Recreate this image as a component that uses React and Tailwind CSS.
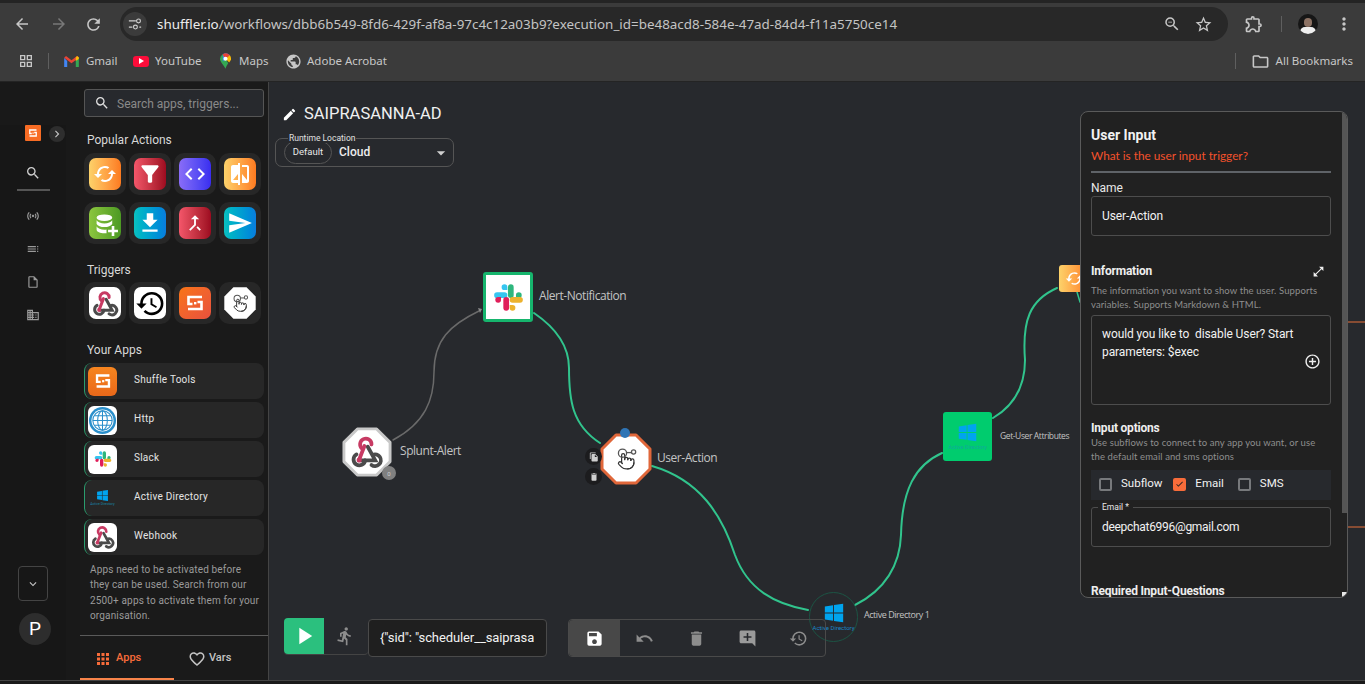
import React from "react";
import {
  MdArrowBack, MdArrowForward, MdRefresh, MdZoomOut, MdStarBorder, MdOutlineExtension, MdMoreVert,
  MdOutlineGridView, MdOutlineFolder, MdPublic, MdSearch, MdEdit, MdArrowDropDown, MdSave, MdUndo, MdDelete,
  MdAddComment, MdHistory, MdPlayArrow, MdDirectionsRun, MdApps, MdFavoriteBorder, MdAddCircleOutline,
  MdOpenInFull, MdCached, MdFilterAlt, MdCode, MdCompare, MdFileDownload, MdCallMerge, MdSend, MdSensors,
  MdToc, MdOutlineInsertDriveFile, MdBusiness, MdKeyboardArrowDown, MdChevronRight, MdFileCopy, MdCheck,
} from "react-icons/md";
import { Pointer } from "lucide-react";

const Webhook = ({ className }) => (
  <svg viewBox="0 0 24 24" className={className} fill="none" strokeWidth="2.500" strokeLinecap="round">
    <path d="M12.500 8.500 L17.500 17.500 H8" stroke="#4b4b4b" />
    <path d="M8.800 9.800 A3.800 3.800 0 1 1 15 7" stroke="#c73a63" />
    <path d="M10.300 8 L7 16.500" stroke="#c73a63" />
    <path d="M5 13.600 A3.900 3.900 0 1 0 10.800 17.500" stroke="#4b4b4b" />
    <path d="M15.800 13.900 A3.900 3.900 0 1 1 15 20.600" stroke="#4b4b4b" />
    <circle cx="6.800" cy="17.300" r="1.700" fill="#c73a63" stroke="none" />
  </svg>
);

const Slack = ({ className }) => (
  <svg viewBox="0 0 54 54" className={className}>
    <path fill="#36c5f0" d="M20 4a5 5 0 1 0 0 10h5V9a5 5 0 0 0-5-5zM20 18H7a5 5 0 0 0 0 10h13a5 5 0 0 0 0-10z" />
    <path fill="#2eb67d" d="M50 23a5 5 0 1 0-10 0v5h5a5 5 0 0 0 5-5zM36 23V9a5 5 0 1 0-10 0v14a5 5 0 1 0 10 0z" />
    <path fill="#ecb22e" d="M34 50a5 5 0 1 0 0-10h-5v5a5 5 0 0 0 5 5zM34 36h13a5 5 0 1 0 0-10H34a5 5 0 1 0 0 10z" />
    <path fill="#e01e5a" d="M4 31a5 5 0 1 0 10 0v-5H9a5 5 0 0 0-5 5zM18 31v14a5 5 0 1 0 10 0V31a5 5 0 1 0-10 0z" />
  </svg>
);

const Windows = ({ className }) => (
  <svg viewBox="0 0 24 24" className={className} fill="#00a4ef">
    <path d="M2 5 L11 3.600 V11.400 H2 Z M12 3.400 L22 2 V11.400 H12 Z M2 12.500 H11 V20.400 L2 19 Z M12 12.500 H22 V22 L12 20.600 Z" />
  </svg>
);

const ShuffleMark = ({ className }) => (
  <svg viewBox="0 0 24 24" className={className} fill="none" stroke="#fff" strokeWidth="2.600">
    <path d="M19 6 H5.500 V13 H9.500" />
    <path d="M5 18 H18.500 V11 H14.500" />
    <rect x="11" y="11" width="2.400" height="2.400" fill="#fff" stroke="none" />
  </svg>
);

const Globe = ({ className }) => (
  <svg viewBox="0 0 30 30" className={className} fill="none">
    <circle cx="15" cy="15" r="14" fill="#2a8fcb" />
    <circle cx="15" cy="15" r="11.400" fill="#fff" />
    <g stroke="#2a8fcb" strokeWidth="1.100">
      <circle cx="15" cy="15" r="10" />
      <ellipse cx="15" cy="15" rx="5" ry="10" />
      <path d="M15 5V25M5 15H25M6.500 10H23.500M6.500 20H23.500" />
    </g>
  </svg>
);

const DbPlus = ({ className }) => (
  <svg viewBox="0 0 24 24" className={className} fill="#fff">
    <ellipse cx="10" cy="5.500" rx="7.500" ry="3.200" />
    <path d="M2.500 8c1 2 4 3 7.500 3s6.500-1 7.500-3v3.500c-1 2-4 3-7.500 3s-6.500-1-7.500-3z" />
    <path d="M2.500 14c1 2 4 3 7.500 3 .7 0 1.400 0 2-.2V20.300c-.6.100-1.300.200-2 .200-4 0-7.500-1.500-7.500-3.500z" />
    <path d="M17 13.500h2.500V17H23v2.500h-3.500V23H17v-3.500h-3.500V17H17z" />
  </svg>
);

const HandClick = ({ className }) => (
  <div className={className}>
    <Pointer className="absolute left-[18%] top-[26%] w-[66%] h-[66%] text-[#333]" strokeWidth={1.6} />
    <svg viewBox="0 0 24 24" className="absolute inset-0 w-full h-full" fill="none" stroke="#555" strokeWidth="1.100">
      <circle cx="9" cy="7" r="3.500" />
      <circle cx="18.500" cy="6" r="1.800" />
      <path d="M12.500 6.500 H16.500" />
    </svg>
  </div>
);

const Tile = ({ children, cls }) => (
  <div className="w-[42px] h-[42px] rounded-[10px] bg-[#272727] flex items-center justify-center">
    <div className={`w-[32px] h-[32px] rounded-[7px] flex items-center justify-center ${cls}`}>{children}</div>
  </div>
);

const orange = "bg-linear-to-r from-[#fcd26a] to-[#fc7a1f]";
const red = "bg-linear-to-r from-[#f4566a] to-[#9d0a20]";
const purple = "bg-linear-to-r from-[#8a6cf7] to-[#3a2cf0]";
const green = "bg-linear-to-r from-[#8cc63f] to-[#4c9a23]";
const teal = "bg-linear-to-r from-[#0cc0c0] to-[#0b7ddd]";

const AppRow = ({ icon, name }) => (
  <div className="h-[36px] w-[180px] rounded-[8px] bg-[#272727] border-l border-l-[#2a9d6e] flex items-center pl-[3px]">
    <div className="w-[29px] h-[29px] rounded-[6px] overflow-hidden flex items-center justify-center shrink-0">{icon}</div>
    <span className="ml-[17px] mb-[3px] text-[10px] text-[#e4e4e4] tracking-[0.25px]">{name}</span>
  </div>
);

const Bookmark = ({ icon, label, cls }) => (
  <div className={`flex items-center ${cls}`}>
    {icon}
    <span className="text-[11.500px] text-[#c7c7c7]">{label}</span>
  </div>
);

const Octagon = ({ stroke, width = 3, className }) => (
  <svg viewBox="0 0 52 52" className={className}>
    <polygon points="16,2 36,2 50,16 50,36 36,50 16,50 2,36 2,16" fill="#fff" stroke={stroke} strokeWidth={width} strokeLinejoin="round" />
  </svg>
);

const Checkbox = ({ label, checked, cls }) => (
  <div className={`flex items-center ${cls}`}>
    <div className={`w-[13px] h-[13px] rounded-[2px] border-2 flex items-center justify-center ${checked ? "bg-[#f86c3a] border-[#f86c3a]" : "border-[#77797c]"}`}>
      {checked && <MdCheck className="w-[12px] h-[12px] text-[#222]" />}
    </div>
    <span className="ml-[9px] text-[11.500px] text-[#f2f2f2]">{label}</span>
  </div>
);

export default function App() {
  return (
    <div className="w-[1365px] h-[684px] overflow-hidden flex flex-col bg-[#1a1a1a] font-['Roboto',sans-serif]">
      {/* Browser chrome */}
      <div className="h-[82px] bg-[#3b3b3b] border-t-[3px] border-t-[#242424] border-b border-b-[#242424] flex flex-col font-['Noto_Sans',sans-serif] shrink-0">
        <div className="h-[38px] flex items-center pt-[4px]">
          <MdArrowBack className="ml-[13px] w-[18px] h-[18px] text-[#c7c7c7]" />
          <MdArrowForward className="ml-[19px] w-[18px] h-[18px] text-[#787878]" />
          <MdRefresh className="ml-[16px] w-[19px] h-[19px] text-[#c7c7c7]" />
          <div className="ml-[17px] w-[1108px] h-[34px] rounded-full bg-[#282828] flex items-center pl-[3px]">
            <div className="w-[24px] h-[24px] rounded-full bg-[#3b3b3b] flex items-center justify-center">
              <svg viewBox="0 0 16 16" className="w-[14px] h-[14px]" fill="none" stroke="#d0d0d0" strokeWidth="1.300">
                <path d="M1 4.500H9M1 11.500H5M13 11.500H15" />
                <circle cx="12" cy="4.500" r="2.200" />
                <circle cx="8.500" cy="11.500" r="2.200" />
              </svg>
            </div>
            <span className="ml-[10px] text-[13.400px] text-[#ececec] whitespace-nowrap">
              shuffler.io<span className="text-[#c4c4c4]">/workflows/dbb6b549-8fd6-429f-af8a-97c4c12a03b9?execution_id=be48acd8-584e-47ad-84d4-f11a5750ce14</span>
            </span>
            <MdZoomOut className="ml-auto w-[18px] h-[18px] text-[#c7c7c7]" />
            <MdStarBorder className="ml-[13px] mr-[15px] w-[19px] h-[19px] text-[#c7c7c7]" />
          </div>
          <MdOutlineExtension className="ml-[16px] w-[20px] h-[20px] text-[#c7c7c7]" />
          <div className="ml-[17px] w-px h-[16px] bg-[#5f5f5f]" />
          <div className="ml-[16px] w-[20px] h-[20px] rounded-full bg-[#161616] overflow-hidden relative flex justify-center">
            <div className="absolute top-[4px] w-[8px] h-[9px] rounded-full bg-[#8c7264]" />
            <div className="absolute top-[13px] w-[16px] h-[10px] rounded-full bg-[#eeeeee]" />
          </div>
          <MdMoreVert className="ml-[16px] w-[20px] h-[20px] text-[#c7c7c7]" />
        </div>
        <div className="flex-1 flex items-center">
          <MdOutlineGridView className="ml-[18px] w-[16px] h-[16px] text-[#c7c7c7]" />
          <div className="ml-[14px] w-px h-[16px] bg-[#5f5f5f]" />
          <Bookmark
            cls="ml-[15px] w-[67px]"
            label="Gmail"
            icon={
              <svg viewBox="0 0 24 18" className="w-[15px] h-[11px] mr-[7px]">
                <path fill="#4285f4" d="M0 3v15h5V8z" />
                <path fill="#34a853" d="M19 8v10h5V3z" />
                <path fill="#ea4335" d="M0 3 L12 12 L24 3 L21 0 L12 7 L3 0 Z" />
                <path fill="#fbbc05" d="M19 3 L21 0 L24 2 V5 L19 8 Z" />
              </svg>
            }
          />
          <Bookmark
            cls="ml-[2px] w-[85px]"
            label="YouTube"
            icon={
              <div className="w-[16px] h-[11px] mr-[6px] rounded-[3px] bg-[#fc0d3a] flex items-center justify-center">
                <div className="w-0 h-0 border-y-[3px] border-y-transparent border-l-[5px] border-l-white" />
              </div>
            }
          />
          <Bookmark
            cls="ml-[2px] w-[66px]"
            label="Maps"
            icon={
              <svg viewBox="0 0 24 34" className="w-[11px] h-[16px] mr-[8px]">
                <path fill="#34a853" d="M12 34 C9 26 0 20 0 12 A12 12 0 0 1 6 2 L18 22 C15 26 13 30 12 34Z" />
                <path fill="#4285f4" d="M6 2 A12 12 0 0 1 21 4 L6 18 Z" />
                <path fill="#fbbc05" d="M21 4 A12 12 0 0 1 20 20 L12 12 Z" />
                <path fill="#ea4335" d="M6 2 A12 12 0 0 1 21 4 L15 10 L8 7 Z" />
                <circle cx="12" cy="12" r="4.500" fill="#fff" />
              </svg>
            }
          />
          <Bookmark
            cls="ml-[-1px]"
            label="Adobe Acrobat"
            icon={<MdPublic className="w-[17px] h-[17px] mr-[5px] text-[#c7c7c7]" />}
          />
          <div className="ml-auto w-px h-[16px] bg-[#5f5f5f]" />
          <MdOutlineFolder className="ml-[15px] w-[19px] h-[19px] text-[#c7c7c7]" />
          <span className="ml-[6px] mr-[12px] text-[11.500px] text-[#c7c7c7]">All Bookmarks</span>
        </div>
      </div>

      <div className="flex h-[598px] shrink-0">
        {/* Rail */}
        <div className="w-[80px] shrink-0 bg-[#191919] pt-[43px] relative">
          <div className="w-[66px] h-full flex flex-col items-center bg-[#171717]">
            <div className="w-[16px] h-[16px] rounded-[1px] bg-[#f86c24] flex items-center justify-center relative">
              <ShuffleMark className="w-[12px] h-[12px]" />
              <div className="absolute left-[24px] top-[1px] w-[16px] h-[16px] rounded-full bg-[#2e2e2e] flex items-center justify-center">
                <MdChevronRight className="w-[14px] h-[14px] text-[#c4c4c4]" />
              </div>
            </div>
            <MdSearch className="mt-[24px] w-[16px] h-[16px] text-[#d0d0d0]" />
            <div className="mt-[8px] w-[33px] h-[2px] bg-[#555555]" />
            <MdSensors className="mt-[18px] w-[14px] h-[14px] text-[#9a9a9a]" />
            <MdToc className="mt-[19px] w-[14px] h-[14px] text-[#9a9a9a]" />
            <MdOutlineInsertDriveFile className="mt-[19px] w-[14px] h-[14px] text-[#9a9a9a]" />
            <MdBusiness className="mt-[19px] w-[14px] h-[14px] text-[#9a9a9a]" />
            <div className="mt-[244px] w-[30px] h-[35px] rounded-[4px] border border-[#444444] flex items-center justify-center">
              <MdKeyboardArrowDown className="w-[14px] h-[14px] text-[#c4c4c4]" />
            </div>
            <div className="mt-[12px] ml-[4px] w-[32px] h-[32px] rounded-full bg-[#2d2d2d] flex items-center justify-center text-[19px] text-white">P</div>
          </div>
        </div>

        {/* Sidebar */}
        <div className="w-[189px] shrink-0 border-r border-r-[#444444] bg-[#1a1a1a] flex flex-col">
          <div className="px-[4px] pt-[7px] flex-1">
            <div className="w-[180px] h-[28px] rounded-[3px] border border-[#555555] bg-[#27292d] flex items-center pl-[9px]">
              <MdSearch className="w-[16px] h-[16px] text-[#e0e0e0]" />
              <span className="ml-[7px] pt-[1px] text-[12px] text-[#8a8a8a]">Search apps, triggers...</span>
            </div>
            <div className="mt-[15px] ml-[3px] h-[16px] text-[12px] leading-[16px] text-[#d8d8d8]">Popular Actions</div>
            <div className="mt-[5px] w-[177px] grid grid-cols-4 gap-x-[3px] gap-y-[7px]">
              <Tile cls={orange}><MdCached className="w-[24px] h-[24px] text-white" /></Tile>
              <Tile cls={red}><MdFilterAlt className="w-[26px] h-[26px] text-white" /></Tile>
              <Tile cls={purple}><MdCode className="w-[24px] h-[24px] text-white" /></Tile>
              <Tile cls={orange}><MdCompare className="w-[24px] h-[24px] text-white" /></Tile>
              <Tile cls={green}><DbPlus className="w-[25px] h-[25px] ml-[3px] mt-[2px]" /></Tile>
              <Tile cls={teal}><MdFileDownload className="w-[26px] h-[26px] text-white" /></Tile>
              <Tile cls={red}><MdCallMerge className="w-[22px] h-[22px] text-white" /></Tile>
              <Tile cls={teal}><MdSend className="w-[26px] h-[26px] text-white" /></Tile>
            </div>
            <div className="mt-[18px] ml-[3px] h-[16px] text-[12px] leading-[16px] text-[#d8d8d8]">Triggers</div>
            <div className="mt-[4px] w-[177px] grid grid-cols-4 gap-x-[3px]">
              <Tile cls="bg-white"><Webhook className="w-[29px] h-[29px]" /></Tile>
              <Tile cls="bg-white"><MdHistory className="w-[31px] h-[31px] text-black" /></Tile>
              <Tile cls="bg-linear-to-br from-[#f97412] to-[#e8503c]"><ShuffleMark className="w-[24px] h-[24px]" /></Tile>
              <div className="w-[42px] h-[42px] rounded-[10px] bg-[#272727] flex items-center justify-center relative">
                <Octagon stroke="#ffffff" width={0} className="absolute left-[4px] top-[4px] w-[34px] h-[34px]" />
                <HandClick className="relative w-[22px] h-[22px]" />
              </div>
            </div>
            <div className="mt-[18px] ml-[3px] h-[16px] text-[12px] leading-[16px] text-[#d8d8d8]">Your Apps</div>
            <div className="mt-[5px] flex flex-col gap-y-[3px]">
              <AppRow name="Shuffle Tools" icon={<div className="w-full h-full bg-linear-to-b from-[#f6851f] to-[#e9681a] flex items-center justify-center"><ShuffleMark className="w-[22px] h-[22px]" /></div>} />
              <AppRow name="Http" icon={<Globe className="w-[29px] h-[29px] bg-white" />} />
              <AppRow name="Slack" icon={<div className="w-full h-full bg-white flex items-center justify-center"><Slack className="w-[18px] h-[18px]" /></div>} />
              <AppRow
                name="Active Directory"
                icon={
                  <div className="w-full h-full flex flex-col items-center justify-center">
                    <Windows className="w-[13px] h-[13px]" />
                    <span className="text-[3.500px] leading-[5px] text-[#1a86a8] whitespace-nowrap">Active Directory</span>
                  </div>
                }
              />
              <AppRow name="Webhook" icon={<div className="w-full h-full bg-white flex items-center justify-center"><Webhook className="w-[26px] h-[26px]" /></div>} />
            </div>
            <p className="mt-[7px] ml-[6px] w-[176px] text-[10px] leading-[15.400px] tracking-[0.15px] text-[#9a9a9a]">
              Apps need to be activated before<br />they can be used. Search from our<br />2500+ apps to activate them for your<br />organisation.
            </p>
          </div>
          <div className="h-[45px] border-t border-t-[#5a5a5a] flex shrink-0">
            <div className="w-[94px] h-[44px] border-b-2 border-b-[#f8844a] flex items-center pl-[14px] pt-[3px] text-[#f86c3a]">
              <MdApps className="w-[18px] h-[18px]" />
              <span className="ml-[4px] text-[11px] font-medium">Apps</span>
            </div>
            <div className="w-[94px] flex items-center pl-[14px] pt-[1px] text-[#c4c4c4]">
              <MdFavoriteBorder className="w-[18px] h-[18px]" />
              <span className="ml-[3px] text-[11px] font-medium">Vars</span>
            </div>
          </div>
        </div>

        {/* Canvas */}
        <div className="relative flex-1 bg-[#27292d] flex flex-col pt-[22px] pb-[23px] pl-[6px] overflow-hidden">
          {/* edges and nodes */}
          <svg className="absolute left-0 top-0 w-[1096px] h-[598px] blur-[0.3px]" viewBox="0 0 1096 598" fill="none">
            <g transform="translate(-269 -82)" strokeLinecap="round">
              <path d="M393 440 C425 423 434 400 434 372 C434 340 450 325 479 311" stroke="#6a6a6a" strokeWidth="1.500" />
              <path d="M478 308 L482 309 L480 313 Z" fill="#8a8a8a" />
              <g stroke="#31c48d" strokeWidth="2">
                <path d="M534 313 C556 328 569 345 569 368 C569 400 572 425 600 443" />
                <path d="M652 466 C700 480 722 515 735 555 C748 590 775 604 808 610" />
                <path d="M855 605 C885 590 900 565 901 535 C902 490 915 465 942 453" />
                <path d="M993 418 C1015 405 1025 385 1025 360 C1022 320 1030 300 1057 288" />
              </g>
              <path d="M1077 292 L1080 302" stroke="#31c48d" strokeWidth="1.500" />
              <path d="M1348 322 H1365 M1348 527 H1365" stroke="#e8703a" strokeWidth="1" />
            </g>
          </svg>

          {/* Splunt-Alert */}
          <Octagon stroke="#c8c8c8" className="absolute left-[73px] top-[345px] w-[50px] h-[50px] blur-[0.3px]" />
          <Webhook className="absolute left-[80px] top-[352px] w-[36px] h-[36px]" />
          <div className="absolute left-[113px] top-[384px] w-[14px] h-[14px] rounded-full bg-[#808080] flex items-center justify-center text-[6px] text-[#d0d0d0]">0</div>
          <span className="absolute left-[131px] top-[361px] text-[12px] leading-[16px] text-[#c4c4c4] font-['Open_Sans',sans-serif] tracking-[-0.45px]">Splunt-Alert</span>

          {/* Alert-Notification */}
          <div className="absolute left-[214px] top-[190px] w-[50px] h-[50px] rounded-[3px] border-[3px] border-[#16b56d] bg-white flex items-center justify-center">
            <Slack className="w-[31px] h-[31px]" />
          </div>
          <span className="absolute left-[270px] top-[206px] text-[12px] leading-[16px] text-[#c4c4c4] font-['Open_Sans',sans-serif] tracking-[-0.45px]">Alert-Notification</span>

          {/* User-Action */}
          <Octagon stroke="#e0673a" className="absolute left-[331px] top-[351px] w-[52px] h-[52px]" />
          <HandClick className="absolute left-[343px] top-[363px] w-[28px] h-[28px]" />
          <div className="absolute left-[351px] top-[346px] w-[10px] h-[10px] rounded-full bg-[#2f74b5]" />
          <div className="absolute left-[316px] top-[366px] w-[17px] h-[17px] rounded-full bg-[#1c1c1e] flex items-center justify-center">
            <MdFileCopy className="w-[10px] h-[10px] text-[#cfcfcf]" />
          </div>
          <div className="absolute left-[316px] top-[386px] w-[17px] h-[17px] rounded-full bg-[#1c1c1e] flex items-center justify-center">
            <MdDelete className="w-[10px] h-[10px] text-[#cfcfcf]" />
          </div>
          <span className="absolute left-[388px] top-[368px] text-[12px] leading-[16px] text-[#c4c4c4] font-['Open_Sans',sans-serif] tracking-[-0.45px]">User-Action</span>

          {/* Active Directory 1 */}
          <div className="absolute left-[540px] top-[510px] w-[49px] h-[50px] rounded-full border border-[#1c5444] flex flex-col items-center justify-center">
            <Windows className="w-[22px] h-[22px]" />
            <span className="text-[6px] leading-[8px] text-[#1a86c8] whitespace-nowrap">Active Directory</span>
          </div>
          <span className="absolute left-[595px] top-[527px] text-[9px] leading-[12px] text-[#c4c4c4] font-['Open_Sans',sans-serif] tracking-[-0.45px]">Active Directory 1</span>

          {/* Get-User Attributes */}
          <div className="absolute left-[674px] top-[330px] w-[49px] h-[49px] rounded-[3px] bg-[#00cc6e] flex flex-col items-center justify-center">
            <Windows className="w-[21px] h-[21px]" />
            <span className="text-[5.500px] leading-[8px] text-[#10a8a0] whitespace-nowrap">Active Directory</span>
          </div>
          <span className="absolute left-[731px] top-[348px] text-[8.500px] leading-[12px] text-[#c4c4c4] font-['Open_Sans',sans-serif] tracking-[-0.4px]">Get-User Attributes</span>

          {/* Shuffle tools node */}
          <div className="absolute left-[790px] top-[183px] w-[30px] h-[27px] rounded-[3px] bg-linear-to-r from-[#fcd26a] to-[#fc7a1f] flex items-center justify-center">
            <MdCached className="w-[19px] h-[19px] text-white" />
          </div>

          {/* Title */}
          <div className="relative flex items-center h-[20px] pl-[7px]">
            <MdEdit className="w-[15px] h-[15px] text-white" />
            <span className="ml-[7px] text-[16.500px] text-[#f0f0f0]">SAIPRASANNA-AD</span>
          </div>

          {/* Runtime */}
          <div className="relative mt-[14px] w-[179px] h-[29px] rounded-[7px] border border-[#555555] flex items-center pl-[8px]">
            <span className="absolute left-[12px] top-[-6px] px-[1px] bg-[#27292d] text-[8.500px] leading-[10px] text-[#e0e0e0]">Runtime Location</span>
            <div className="w-[48px] h-[23px] rounded-full border border-[#555555] flex items-center justify-center text-[9.500px] text-[#e8e8e8]">Default</div>
            <span className="ml-[7px] pb-[1px] text-[12px] font-medium text-[#eeeeee]">Cloud</span>
            <MdArrowDropDown className="ml-auto mr-[2px] w-[20px] h-[20px] text-[#cfcfcf]" />
          </div>

          {/* Bottom controls */}
          <div className="relative mt-auto flex items-end pl-[9px]">
            <div className="flex items-start">
              <div className="w-[84px] h-[37px] rounded-[4px] flex items-center border-b border-b-[#444444]">
                <div className="w-[40px] h-[36px] rounded-l-[4px] bg-[#2bc07e] flex items-center justify-center">
                  <MdPlayArrow className="w-[28px] h-[28px] text-white" />
                </div>
                <MdDirectionsRun className="ml-[11px] w-[20px] h-[20px] text-[#8d8d8d]" />
              </div>
              <div className="mt-[1px] w-[179px] h-[38px] rounded-[4px] bg-[#1f1f1f] border border-[#4a4a4a] pl-[11px] pr-[11px] flex items-center overflow-hidden">
                <span className="text-[13px] text-[#f2f2f2] whitespace-nowrap overflow-hidden tracking-[-0.1px]">{'{"sid": "scheduler__saiprasa'}</span>
              </div>
            </div>
            <div className="ml-[21px] w-[258px] h-[38px] rounded-[4px] border border-[#4a4a4a] flex items-center">
              <div className="w-[51px] h-full rounded-l-[4px] bg-[#484848] flex items-center justify-center">
                <MdSave className="w-[19px] h-[19px] text-white" />
              </div>
              <MdUndo className="ml-[15px] w-[19px] h-[19px] text-[#8d8d8d]" />
              <MdDelete className="ml-[33px] w-[19px] h-[19px] text-[#8d8d8d]" />
              <MdAddComment className="ml-[32px] w-[19px] h-[19px] text-[#9a9a9a]" />
              <MdHistory className="ml-[32px] w-[19px] h-[19px] text-[#8d8d8d]" />
            </div>
          </div>

          {/* User Input panel */}
          <div className="absolute left-[811px] top-[29px] w-[268px] h-[487px] rounded-[8px] border border-[#5a5a5a] bg-[#212121] overflow-hidden pl-[10px] pt-[13px]">
            <div className="absolute right-0 top-0 w-[5px] h-[401px] bg-[#555555]" />
            <div className="absolute right-0 bottom-0 w-[5px] h-[5px] bg-[#e8e8e8]" />
            <div className="h-[20px] text-[14px] leading-[20px] font-bold text-[#f2f2f2]">User Input</div>
            <div className="mt-[2px] h-[18px] text-[11.800px] leading-[18px] text-[#f4512c] font-['Lato',sans-serif]">What is the user input trigger?</div>
            <div className="mt-[6px] w-[240px] h-[2px] bg-[#5f6368]" />
            <div className="mt-[7px] h-[16px] text-[12px] leading-[16px] text-[#e8e8e8]">Name</div>
            <div className="w-[240px] h-[40px] rounded-[3px] border border-[#4d4d4d] flex items-center pl-[10px] text-[12px] text-[#f2f2f2] tracking-[-0.1px]">User-Action</div>
            <div className="relative mt-[27px] h-[16px] w-[240px] flex items-center justify-between pr-[6px]">
              <span className="text-[12px] font-bold text-[#eeeeee] tracking-[-0.2px]">Information</span>
              <MdOpenInFull className="w-[13px] h-[13px] text-[#f0f0f0]" />
            </div>
            <p className="mt-[5px] w-[240px] h-[28px] text-[9.500px] leading-[14px] text-[#8e8e8e] tracking-[0.1px] font-['Lato',sans-serif]">
              The information you want to show the user. Supports variables. Supports Markdown &amp; HTML.
            </p>
            <div className="relative mt-[3px] w-[240px] h-[90px] rounded-[3px] border border-[#4d4d4d] pl-[10px] pr-[20px] pt-[9px] text-[12px] leading-[18px] text-[#f2f2f2] tracking-[-0.1px]">
              would you like to&nbsp; disable User? Start parameters: $exec
              <MdAddCircleOutline className="absolute right-[9px] top-[37px] w-[17px] h-[17px] text-[#f0f0f0]" />
            </div>
            <div className="mt-[15px] h-[16px] text-[12px] leading-[16px] font-bold text-[#eeeeee] tracking-[-0.2px]">Input options</div>
            <p className="w-[240px] h-[28px] text-[9.500px] leading-[14px] text-[#8e8e8e] tracking-[0.1px] font-['Lato',sans-serif]">
              Use subflows to connect to any app you want, or use the default email and sms options
            </p>
            <div className="mt-[6px] w-[240px] h-[30px] bg-[#27292d] flex items-center pl-[8px] pb-[2px]">
              <Checkbox label="Subflow" />
              <Checkbox label="Email" checked cls="ml-[11px]" />
              <Checkbox label="SMS" cls="ml-[14px]" />
            </div>
            <div className="relative mt-[7px] w-[240px] h-[40px] rounded-[3px] border border-[#4d4d4d] flex items-center pl-[10px] text-[12px] text-[#f2f2f2] tracking-[-0.3px]">
              <span className="absolute left-[6px] top-[-6px] px-[4px] bg-[#212121] text-[8.500px] leading-[10px] text-[#e8e8e8] tracking-normal">Email *</span>
              deepchat6996@gmail.com
            </div>
            <div className="mt-[36px] h-[16px] text-[12px] leading-[16px] font-bold text-[#eeeeee] tracking-[-0.2px]">Required Input-Questions</div>
          </div>
        </div>
      </div>
      <div className="flex-1 border-t border-t-[#444444] bg-[#1a1a1a]" />
    </div>
  );
}
